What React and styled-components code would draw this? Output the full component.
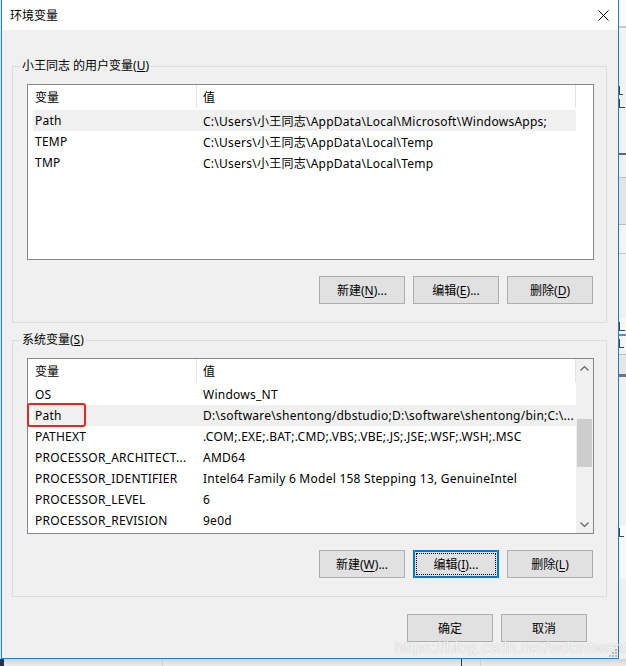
import React from 'react';
import styled, { createGlobalStyle } from 'styled-components';

const GlobalStyle = createGlobalStyle`
  html, body {
    margin: 0;
    padding: 0;
  }
  body {
    width: 626px;
    height: 666px;
    overflow: hidden;
    background: #e6e6e6;
    font-family: "Noto Sans", "Noto Sans CJK SC", sans-serif;
    font-size: 12px;
    color: #000;
  }
`;

const userVars = [
  { name: 'Path', value: 'C:\\Users\\小王同志\\AppData\\Local\\Microsoft\\WindowsApps;', selected: true },
  { name: 'TEMP', value: 'C:\\Users\\小王同志\\AppData\\Local\\Temp' },
  { name: 'TMP', value: 'C:\\Users\\小王同志\\AppData\\Local\\Temp' },
];

const systemVars = [
  { name: 'OS', value: 'Windows_NT' },
  { name: 'Path', value: 'D:\\software\\shentong/dbstudio;D:\\software\\shentong/bin;C:\\...', selected: true },
  { name: 'PATHEXT', value: '.COM;.EXE;.BAT;.CMD;.VBS;.VBE;.JS;.JSE;.WSF;.WSH;.MSC' },
  { name: 'PROCESSOR_ARCHITECT...', value: 'AMD64' },
  { name: 'PROCESSOR_IDENTIFIER', value: 'Intel64 Family 6 Model 158 Stepping 13, GenuineIntel' },
  { name: 'PROCESSOR_LEVEL', value: '6' },
  { name: 'PROCESSOR_REVISION', value: '9e0d' },
];

const CloseIcon = () => (
  <svg width="11" height="11" viewBox="0 0 11 11">
    <path d="M0.5 0.5 L10.5 10.5 M10.5 0.5 L0.5 10.5" stroke="#000" strokeWidth="1" fill="none" />
  </svg>
);

const Chevron = ({ down }) => (
  <svg width="9" height="6" viewBox="0 0 9 6">
    <polyline
      points={down ? '0.5,0.5 4.5,4.5 8.5,0.5' : '0.5,5.5 4.5,1.5 8.5,5.5'}
      stroke="#606060"
      strokeWidth="1.2"
      fill="none"
    />
  </svg>
);

const Grip = () => (
  <svg width="8" height="8" viewBox="0 0 8 8">
    <rect x="6" y="0" width="2" height="2" fill="#b8b8b8" />
    <rect x="3" y="3" width="2" height="2" fill="#b8b8b8" />
    <rect x="6" y="3" width="2" height="2" fill="#b8b8b8" />
    <rect x="0" y="6" width="2" height="2" fill="#b8b8b8" />
    <rect x="3" y="6" width="2" height="2" fill="#b8b8b8" />
    <rect x="6" y="6" width="2" height="2" fill="#b8b8b8" />
  </svg>
);

function VarList({ rows, scroll, mark }) {
  return (
    <ListView>
      <TableArea>
        <HeaderRow>
          <HeaderCell $first>变量</HeaderCell>
          <HeaderCell>值</HeaderCell>
        </HeaderRow>
        {rows.map((r) => (
          <Row key={r.name} $selected={r.selected}>
            <NameCell>{r.name}</NameCell>
            <ValueCell>{r.value}</ValueCell>
          </Row>
        ))}
      </TableArea>
      {scroll ? (
        <Scrollbar>
          <ArrowBox><Chevron /></ArrowBox>
          <Thumb />
          <TrackRest />
          <ArrowBox><Chevron down /></ArrowBox>
        </Scrollbar>
      ) : (
        <BlankScroll />
      )}
      {mark && <RedMark />}
    </ListView>
  );
}

function Btn({ label, keyChar, dots, focused }) {
  return (
    <Button $focused={focused}>
      {label}
      {keyChar && (
        <>
          (<u>{keyChar}</u>){dots ? '...' : ''}
        </>
      )}
    </Button>
  );
}

export default function App() {
  return (
    <>
      <GlobalStyle />
      <Desktop>
        <TopRow>
          <LeftEdge />
          <Dialog>
            <TitleBar>
              <Title>环境变量</Title>
              <CloseIcon />
            </TitleBar>
            <Body>
              <Group>
                <GroupTitle>小王同志 的用户变量(<u>U</u>)</GroupTitle>
                <VarList rows={userVars} />
                <ButtonRow>
                  <Btn label="新建" keyChar="N" dots />
                  <Btn label="编辑" keyChar="E" dots />
                  <Btn label="删除" keyChar="D" />
                </ButtonRow>
              </Group>
              <Group $second>
                <GroupTitle>系统变量(<u>S</u>)</GroupTitle>
                <VarList rows={systemVars} scroll mark />
                <ButtonRow>
                  <Btn label="新建" keyChar="W" dots />
                  <Btn label="编辑" keyChar="I" dots focused />
                  <Btn label="删除" keyChar="L" />
                </ButtonRow>
              </Group>
              <Footer>
                <Btn label="确定" />
                <Btn label="取消" />
              </Footer>
            </Body>
            <Watermark>https://blog.csdn.net/wdontwant</Watermark>
            <GripBox><Grip /></GripBox>
          </Dialog>
          <SideStrip>
            <Band $h={26} $bg="#fafafa" />
            <Band $h={2} $bg="#c8c8c8" />
            <Band $h={56} $bg="#f2f2f2" />
            <Band $h={12} $bg="#f2f2f2"><Tick $w={3} /></Band>
            <Band $h={14} $bg="#f2f2f2"><Tick $w={5} /></Band>
            <Band $h={43} $bg="#f2f2f2" />
            <Band $h={2} $bg="#5b6a7a" />
            <Band $h={22} $bg="#f0f0f0" />
            <Band $h={1} $bg="#bdbdbd" />
            <Band $h={46} $bg="#e4e4e4" />
            <Band $h={1} $bg="#bdbdbd" />
            <Band $h={28} $bg="#f4f4f4" />
            <Band $h={1} $bg="#c8c8c8" />
            <Band $h={64} $bg="#f0f0f0" />
            <Band $h={16} $bg="#f6f6f6"><Tick $w={5} /></Band>
            <Band $h={2} $bg="#4b94d8" />
            <Band $h={14} $bg="#f6f6f6"><Tick $w={4} /></Band>
            <Band $h={4} $bg="#f0f0f0" />
            <Band $h={1} $bg="#c0c0c0" />
            <Band $h={19} $bg="#e6e6e6" />
            <Band $h={3} $bg="#65768a" />
            <Band $h={148} $bg="#f0f0f0" />
            <Band $h={14} $bg="#fafafa"><Tick $w={4} /></Band>
            <Band $h={40} $bg="#f8f8f8" />
            <Band $h={60} $bg="#efefef" />
          </SideStrip>
        </TopRow>
        <BottomBand>
          <DarkCorner />
          <BottomGap $w={158} />
          <BottomLine />
          <BottomGap $w={298} />
          <BottomLine $dark />
          <BottomGap $w={18} />
          <BottomLine />
        </BottomBand>
      </Desktop>
    </>
  );
}

const Desktop = styled.div`
  display: flex;
  flex-direction: column;
  width: 626px;
  height: 666px;
`;

const TopRow = styled.div`
  display: flex;
  height: 659px;
`;

const LeftEdge = styled.div`
  width: 1px;
  background: #e0e0e0;
`;

const Dialog = styled.div`
  position: relative;
  width: 618px;
  box-sizing: border-box;
  border: 1px solid #1a80d6;
  border-top: none;
  background: #f0f0f0;
  display: flex;
  flex-direction: column;
`;

const TitleBar = styled.div`
  height: 30px;
  background: #fff;
  display: flex;
  align-items: center;
  justify-content: space-between;
  padding: 0 9px 0 8px;
`;

const Title = styled.span`
  font-size: 12px;
`;

const Body = styled.div`
  padding: 36px 11px 0 10px;
  display: flex;
  flex-direction: column;
`;

const Group = styled.div`
  position: relative;
  border: 1px solid #dcdcdc;
  padding: 17px 12px 18px 14px;
  margin-top: ${(p) => (p.$second ? '17px' : '0')};
`;

const GroupTitle = styled.span`
  position: absolute;
  top: -9px;
  left: 7px;
  padding: 0 2px;
  line-height: 16px;
  background: #f0f0f0;
`;

const ListView = styled.div`
  position: relative;
  height: 176px;
  box-sizing: border-box;
  border: 1px solid #828790;
  background: #fff;
  display: flex;
`;

const TableArea = styled.div`
  flex: 1;
  display: flex;
  flex-direction: column;
`;

const HeaderRow = styled.div`
  display: grid;
  grid-template-columns: 169px 1fr;
  height: 25px;
`;

const HeaderCell = styled.div`
  display: flex;
  align-items: center;
  padding-left: ${(p) => (p.$first ? '7px' : '6px')};
  border-right: 1px solid #e5e5e5;
  margin-bottom: 2px;
`;

const Row = styled.div`
  display: grid;
  grid-template-columns: 164px 1fr;
  height: 21px;
  margin-left: 5px;
  align-items: center;
  background: ${(p) => (p.$selected ? '#f0f0f0' : 'transparent')};
  white-space: nowrap;
  letter-spacing: 0.25px;
`;

const NameCell = styled.div`
  padding-left: 2px;
  overflow: hidden;
`;

const ValueCell = styled.div`
  padding-left: 6px;
  overflow: hidden;
`;

const BlankScroll = styled.div`
  width: 17px;
`;

const Scrollbar = styled.div`
  width: 17px;
  background: #f0f0f0;
  display: flex;
  flex-direction: column;
`;

const ArrowBox = styled.div`
  height: 17px;
  display: flex;
  align-items: center;
  justify-content: center;
`;

const Thumb = styled.div`
  margin: 43px 1px 0;
  height: 48px;
  background: #cdcdcd;
`;

const TrackRest = styled.div`
  flex: 1;
`;

const RedMark = styled.div`
  position: absolute;
  left: -1px;
  top: 44px;
  width: 59px;
  height: 24px;
  box-sizing: border-box;
  border: 2px solid #e8261e;
  border-radius: 3px;
`;

const ButtonRow = styled.div`
  display: flex;
  justify-content: flex-end;
  gap: 8px;
  margin-top: 16px;
  padding-right: 1px;
`;

const Footer = styled.div`
  display: flex;
  justify-content: flex-end;
  gap: 8px;
  margin-top: 17px;
  padding-right: 20px;
`;

const Button = styled.button`
  position: relative;
  width: 86px;
  height: 28px;
  padding: 0;
  box-sizing: border-box;
  background: #e1e1e1;
  border: ${(p) => (p.$focused ? '2px solid #0078d7' : '1px solid #adadad')};
  font-family: "Noto Sans", "Noto Sans CJK SC", sans-serif;
  font-size: 12px;
  color: #000;
  u {
    text-underline-offset: 2px;
  }
  &::after {
    content: '';
    display: ${(p) => (p.$focused ? 'block' : 'none')};
    position: absolute;
    inset: 1px;
    border: 1px dotted #000;
  }
`;

const Watermark = styled.div`
  position: absolute;
  left: 393px;
  top: 639px;
  font-family: "Liberation Sans", Arial, sans-serif;
  font-size: 16px;
  letter-spacing: 0.3px;
  line-height: 18px;
  color: rgba(255, 255, 255, 0.85);
  text-shadow: 0 0 1px rgba(110, 110, 110, 0.5);
  white-space: nowrap;
`;

const GripBox = styled.div`
  position: absolute;
  right: 1px;
  bottom: 1px;
  display: flex;
`;

const SideStrip = styled.div`
  flex: 1;
  display: flex;
  flex-direction: column;
  overflow: hidden;
  background: #f0f0f0;
`;

const Band = styled.div`
  height: ${(p) => p.$h}px;
  flex-shrink: 0;
  background: ${(p) => p.$bg};
  overflow: hidden;
  display: flex;
  align-items: center;
`;

const Tick = styled.div`
  width: ${(p) => p.$w}px;
  height: 8px;
  border-left: 1px solid #444;
  border-bottom: 1px solid #444;
`;

const BottomBand = styled.div`
  flex: 1;
  display: flex;
  background: linear-gradient(#d4d4d4, #ececec);
`;

const DarkCorner = styled.div`
  width: 4px;
  background: #24334f;
`;

const BottomGap = styled.div`
  width: ${(p) => p.$w}px;
`;

const BottomLine = styled.div`
  width: 1px;
  background: ${(p) => (p.$dark ? '#333' : '#d0d0d0')};
`;
